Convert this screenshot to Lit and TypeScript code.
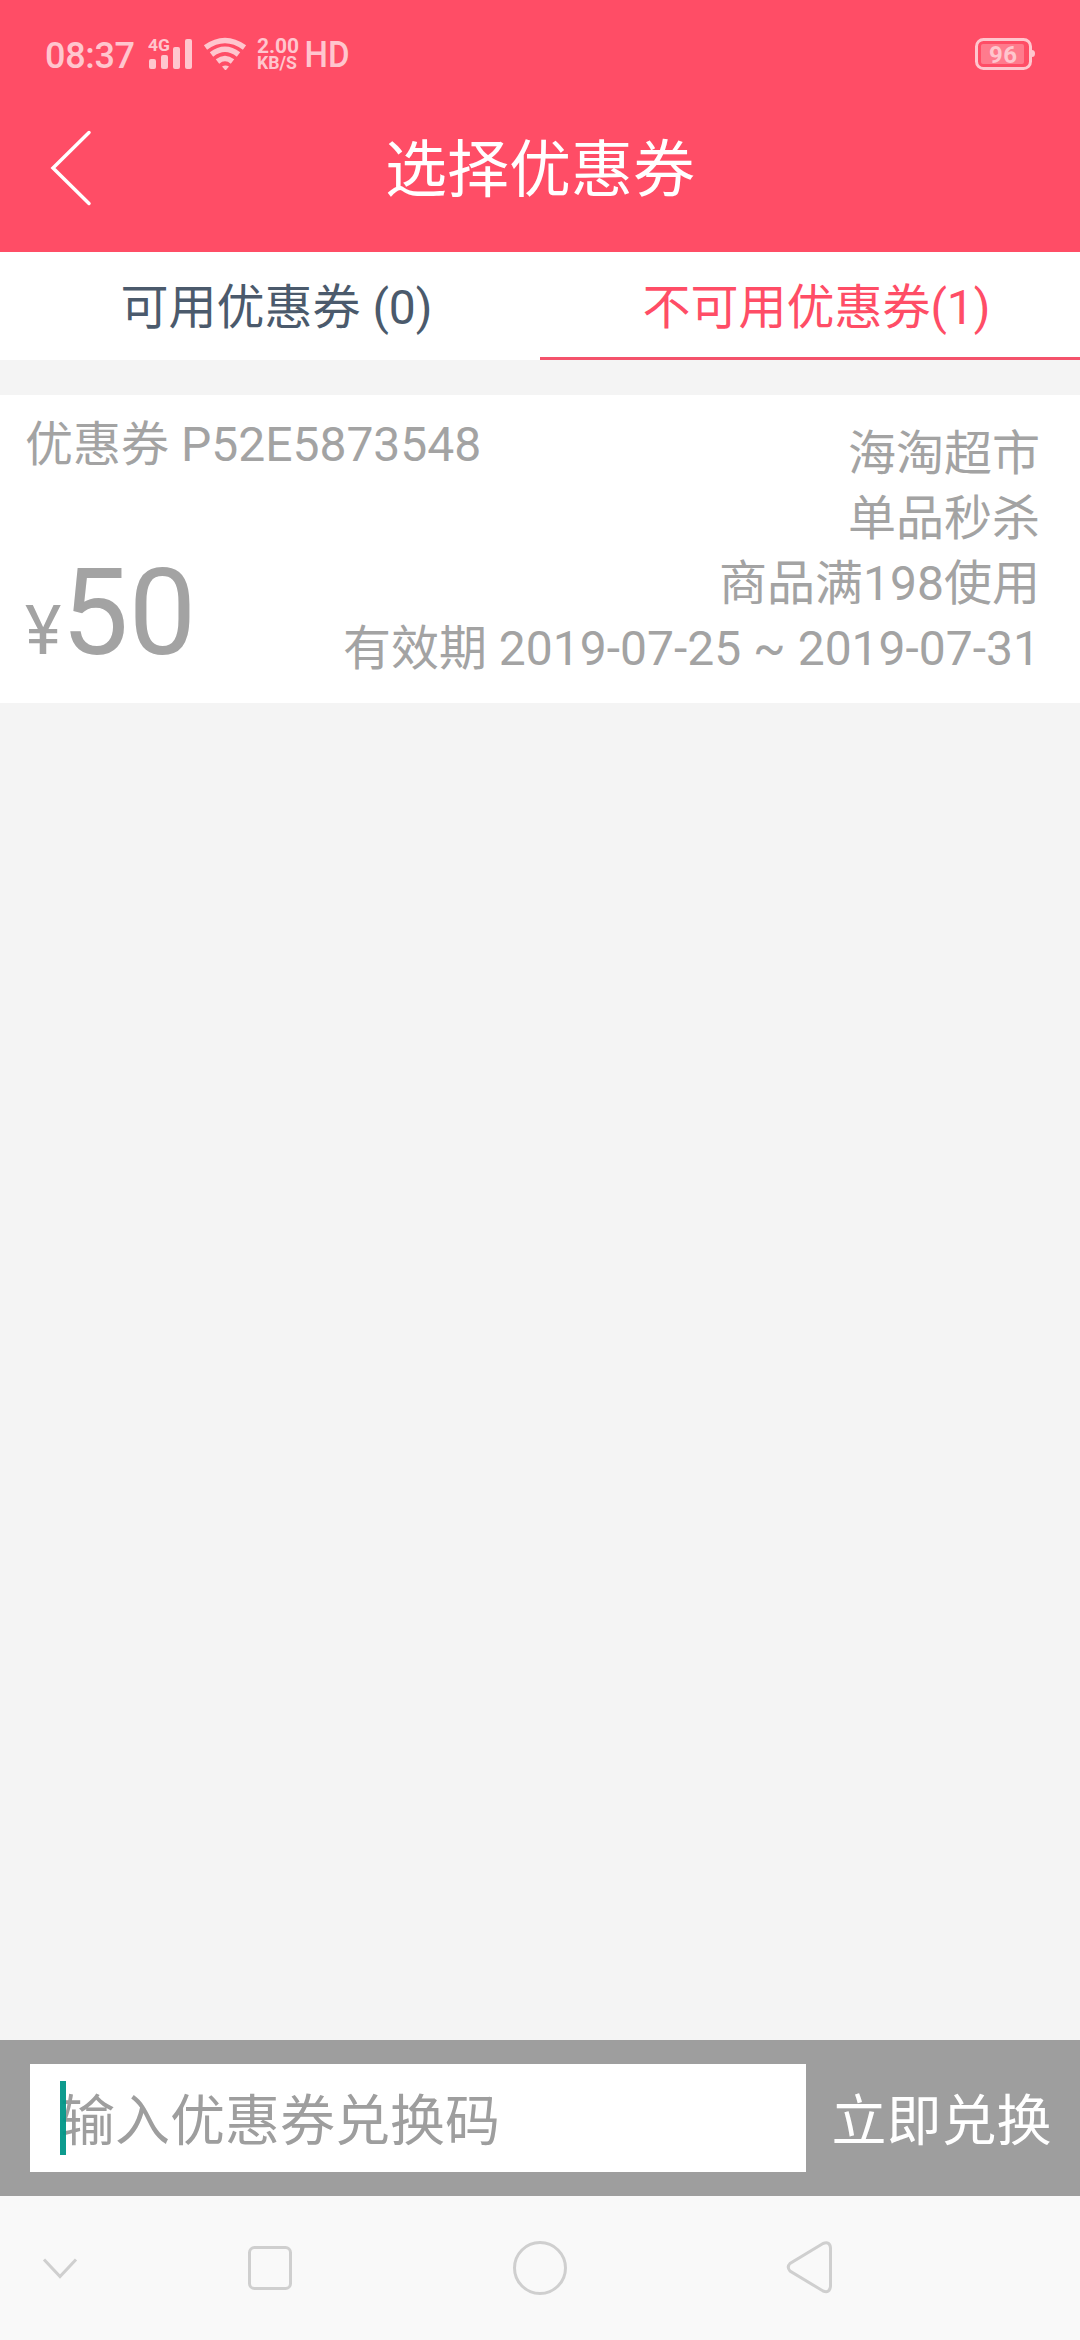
import { LitElement, html, css } from "lit";
import { customElement, state } from "lit/decorators.js";

@customElement("status-bar")
class StatusBar extends LitElement {
  static styles = css`
    :host { display: block; height: 84px; }
    svg { display: block; fill: #ffc6ce; font-family: Roboto, sans-serif; }
    .arc { fill: none; stroke: #ffc6ce; stroke-width: 5.5; }
    .outline { fill: none; stroke: #ffc6ce; stroke-width: 3; }
    .charge { fill: #ff7b8d; }
    .medium { font-weight: 500; }
    .bold { font-weight: 700; }
  `;
  render() {
    return html`
      <svg width="1080" height="84" viewBox="0 0 1080 84">
        <text class="medium" x="45" y="68" font-size="36" textLength="90">08:37</text>
        <text class="bold" x="148" y="51" font-size="16.5" textLength="22" lengthAdjust="spacingAndGlyphs">4G</text>
        <rect x="149" y="59" width="7" height="10" rx="2" />
        <rect x="161" y="55" width="7" height="14" rx="2" />
        <rect x="173" y="47" width="7" height="22" rx="2" />
        <rect x="185" y="39" width="7" height="30" rx="2" />
        <path class="arc" d="M205.500 47.500Q225 33.500 244.500 47.500" />
        <path class="arc" d="M211.500 54.500Q225 44 238.500 54.500" />
        <path class="arc" d="M217.500 61.500Q225 55.500 232.500 61.500" />
        <path d="M222 66.500Q225.500 64.500 229 66.500L226 70H225Z" />
        <text class="bold" x="257" y="53" font-size="21" textLength="42">2.00</text>
        <text class="bold" x="257" y="69" font-size="18" textLength="40" lengthAdjust="spacingAndGlyphs">KB/S</text>
        <text class="medium" x="304.500" y="67" font-size="36" textLength="45" lengthAdjust="spacingAndGlyphs">HD</text>
        <rect class="outline" x="976.500" y="39.500" width="54" height="29" rx="7" />
        <rect class="charge" x="981" y="44" width="43" height="20" rx="2" />
        <path d="M1032 50Q1035 50 1035 53.500T1032 57Z" />
        <text class="bold" x="989" y="63" font-size="24" textLength="28">96</text>
      </svg>
    `;
  }
}

@customElement("nav-keys")
class NavKeys extends LitElement {
  static styles = css`
    :host { display: block; height: 144px; background: #f9f9f9; }
    svg { display: block; fill: none; stroke: #cfcfcf; stroke-width: 3; }
  `;
  render() {
    return html`
      <svg width="1080" height="144" viewBox="0 0 1080 144">
        <path d="M44 63.500L60 80.500L76 63.500" />
        <rect x="249.500" y="51.500" width="41" height="41" rx="5" />
        <circle cx="540" cy="72" r="25.500" />
        <path d="M823 47.500L790 67.500Q786.500 71 790 75L823 95Q830 97.500 830.500 90V52Q830 45 823 47.500Z" />
      </svg>
    `;
  }
}

@customElement("app-root")
class AppRoot extends LitElement {
  @state() active = 1;
  tabs = ["可用优惠券 (0)", "不可用优惠券(1)"];
  details = ["海淘超市", "单品秒杀", "商品满198使用", "有效期 2019-07-25 ~ 2019-07-31"];

  static styles = css`
    :host {
      display: flex;
      flex-direction: column;
      width: 1080px;
      height: 2340px;
      overflow: hidden;
      background: #f4f4f4;
      font-family: Roboto, "Noto Sans CJK SC", sans-serif;
      font-size: 48px;
    }
    .header { flex: none; height: 252px; background: #ff4d66; color: #fff; }
    .titlebar {
      display: grid;
      grid-template-columns: 140px 1fr 140px;
      align-items: center;
      height: 168px;
    }
    .back { display: block; fill: none; stroke: #fff; stroke-width: 3.5; stroke-linecap: round; }
    .title { padding-top: 5px; font-size: 62px; line-height: 72px; text-align: center; }
    .tabs { display: flex; flex: none; height: 108px; background: #fff; }
    .tab {
      flex: 1;
      box-sizing: border-box;
      height: 108px;
      padding: 3px 0 0 13px;
      line-height: 106px;
      text-align: center;
      color: #4b5a6c;
      white-space: pre;
    }
    .tab.active { color: #ff4d66; box-shadow: inset 0 -3px #f4526b; }
    .card {
      display: grid;
      grid-template-columns: 1fr;
      flex: none;
      box-sizing: border-box;
      height: 308px;
      margin-top: 35px;
      padding: 17px 40px 0 25px;
      background: #fff;
      color: #a3a3a3;
      white-space: nowrap;
    }
    /* Summary and details share one cell so each can use the full row width. */
    .summary, .details { grid-area: 1 / 1; }
    .summary { justify-self: start; }
    .details { justify-self: end; padding-top: 9px; text-align: right; line-height: 65px; }
    .code { line-height: 65px; }
    .price { margin-top: 71px; line-height: 130px; font-size: 120px; }
    .yen { font-size: 69px; }
    .space { flex: 1; }
    .redeem {
      display: flex;
      flex: none;
      box-sizing: border-box;
      height: 156px;
      padding: 24px 0 24px 30px;
      background: #9e9e9e;
      font-size: 55px;
      line-height: 115px;
    }
    .field { position: relative; width: 776px; height: 108px; background: #fff; }
    .hint { padding-left: 30px; color: #9e9e9e; }
    .caret { position: absolute; left: 30px; top: 17px; width: 6px; height: 74px; background: #009688; opacity: 0.95; }
    .submit { flex: 1; padding-right: 3px; color: #fff; text-align: center; }
  `;

  render() {
    return html`
      <div class="header">
        <status-bar></status-bar>
        <div class="titlebar">
          <svg class="back" width="140" height="84" viewBox="0 0 140 84">
            <path d="M89 6.500L53 42L89 77.500" />
          </svg>
          <div class="title">选择优惠券</div>
        </div>
      </div>
      <div class="tabs">
        ${this.tabs.map((t, i) => html`<div class="tab ${i === this.active ? "active" : ""}" @click=${() => (this.active = i)}>${t}</div>`)}
      </div>
      <div class="card">
        <div class="summary">
          <div class="code">优惠券 P52E5873548</div>
          <div class="price"><span class="yen">¥</span>50</div>
        </div>
        <div class="details">${this.details.map((d) => html`<div>${d}</div>`)}</div>
      </div>
      <div class="space"></div>
      <div class="redeem">
        <div class="field"><div class="hint">输入优惠券兑换码</div><div class="caret"></div></div>
        <div class="submit">立即兑换</div>
      </div>
      <nav-keys></nav-keys>
    `;
  }
}
